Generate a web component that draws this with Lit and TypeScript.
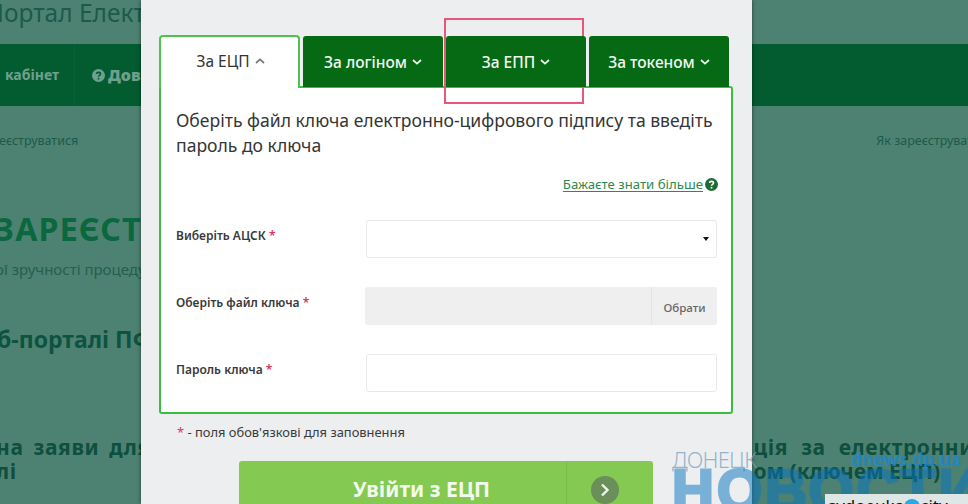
import { LitElement, html, css } from "lit";
import { customElement } from "lit/decorators.js";

const chevron = (up: boolean) => html`<svg class="chev" viewBox="0 0 10 6" width="10" height="6"><path d=${up ? "M1 5 5 1.4 9 5" : "M1 1 5 4.6 9 1"} fill="none" stroke="currentColor" stroke-width="1.7"/></svg>`;

@customElement("app-root")
export class AppRoot extends LitElement {
  static styles = css`
    :host { display: block; position: relative; width: 968px; height: 504px; overflow: hidden; font-family: "Noto Sans", "Open Sans", sans-serif; background: #4d8272; }
    * { box-sizing: border-box; }
    .page { display: flex; flex-direction: column; height: 504px; overflow: hidden; background: #4d8272; color: #0f4f3e; white-space: nowrap; }
    .brand { height: 44px; font-size: 24.5px; line-height: 25px; color: #1c5a4a; margin-left: -14px; flex: none; }
    .nav { height: 62px; flex: none; background: #035c30; display: flex; align-items: center; color: #6fa08e; font-weight: 700; font-size: 14px; }
    .nav span { margin-left: 5px; width: 70px; height: 62px; line-height: 62px; border-right: 1px solid #0a5f3a; }
    .nav b { margin-left: 17px; display: flex; align-items: center; gap: 3px; font-size: 16px; }
    .nav svg { display: block; }
    .crumbs { display: flex; justify-content: space-between; flex: none; font-size: 12.5px; height: 15px; margin-top: 26px; color: #1c5a4a; }
    .crumbs span:first-child { margin-left: -1px; }
    .crumbs span:last-child { margin-right: -26px; }
    .h1 { font-size: 32px; font-weight: 700; color: #0b673e; line-height: 40px; margin: 62px 0 0 -5px; letter-spacing: 1.2px; flex: none; }
    .sub { font-size: 15px; line-height: 20px; margin: 10px 0 0 -5px; color: #235f4f; flex: none; }
    .h3 { font-size: 23px; font-weight: 700; line-height: 28px; margin: 46px 0 0 -3px; color: #0e5341; flex: none; }
    .split { display: flex; justify-content: space-between; margin-top: 82px; font-size: 21px; font-weight: 700; line-height: 24px; color: #0e4f40; letter-spacing: .6px; }
    .split .r { margin-right: -6px; }
    .split .l { margin-left: -4px; word-spacing: 4px; }
    .split .wide { word-spacing: 7px; }
    .split .tight { letter-spacing: 0; }
    .modal { position: absolute; left: 141px; top: 0; width: 611px; height: 504px; background: #eceef0; box-shadow: 0 0 4px rgba(0, 0, 0, .55); padding: 35px 19px 0 18px; color: #333; }
    .tabs { display: flex; gap: 3px; height: 52px; position: relative; z-index: 1; }
    .tab { width: 140px; height: 51px; background: #056a13; color: #f1f7f1; font-size: 15.5px; font-weight: 500; border-radius: 3px 3px 0 0; display: flex; align-items: center; justify-content: center; gap: 5px; padding-top: 1px; margin-top: 1px; }
    .tab.on { width: 141px; height: 53px; margin-top: 0; background: #fff; color: #333; font-size: 15.5px; font-weight: 400; border: 2px solid #4ec24e; border-bottom: 0; padding: 0 0 3px 2px; border-radius: 4px 4px 0 0; }
    .tab.on .chev { color: #777; }
    .panel { margin-top: -1px; height: 328px; background: #fff; border: 2px solid #3dbd3d; border-radius: 0 3px 3px 3px; padding: 20px 15px 0 15px; }
    .lead { font-size: 17.57px; line-height: 25px; color: #353535; margin: 0; white-space: nowrap; }
    .more { display: flex; justify-content: flex-end; align-items: center; gap: 2px; margin: 18px -2px 0 0; font-size: 13.2px; line-height: 16px; color: #2c8a50; }
    .more u { text-underline-offset: 2px; }
    .rows { margin-top: 28px; }
    .row { display: flex; align-items: center; height: 38px; font-size: 12px; font-weight: 600; color: #3a3a3a; }
    .row + .row { margin-top: 29px; }
    .lab { width: 190px; flex: none; padding-bottom: 7px; }
    .star { color: #e0335a; }
    .input { flex: 1; height: 38px; margin-right: -1px; border: 1px solid #e8e8e8; border-radius: 3px; background: #fff; display: flex; align-items: center; justify-content: flex-end; padding-right: 7px; }
    .caret { width: 0; height: 0; border-left: 3.5px solid transparent; border-right: 3.5px solid transparent; border-top: 4px solid #111; }
    .file { flex: 1; height: 38px; margin: 0 -1px; display: flex; background: #efefef; border-radius: 3px; }
    .file i { flex: 1; border-right: 1px solid #e4e4e4; }
    .file span { width: 65px; display: flex; align-items: center; justify-content: center; font-weight: 500; font-size: 11.5px; color: #666; padding-top: 2px; }
    .note { margin: 9px 0 0 18px; font-size: 12.9px; line-height: 18px; color: #3a3a3a; }
    .btn { margin: 20px 0 0 80px; width: 414px; height: 60px; background: #84ca52; border-radius: 3px; display: flex; color: #f3f9ec; font-size: 21px; font-weight: 700; }
    .btn .t { flex: 1; text-align: center; line-height: 56px; padding-left: 38px; }
    .btn .a { width: 87px; border-left: 1px solid #79bd49; display: flex; justify-content: center; padding: 15px 10px 0 0; }
    .btn .a em { width: 28px; height: 28px; border-radius: 50%; background: #6a8f58; display: flex; align-items: center; justify-content: center; }
    .mark { position: absolute; left: 444px; top: 18px; width: 140px; height: 86px; border: 2px solid #e8577a; pointer-events: none; }
    .wm { position: absolute; left: 672px; top: 447px; width: 296px; height: 57px; pointer-events: none; overflow: hidden; }
    .wm .d { font-size: 22px; line-height: 24px; font-weight: 300; color: rgba(120, 160, 190, .75); letter-spacing: -.8px; }
    .wm .n { font-size: 58px; line-height: 70px; font-weight: 700; font-family: "Liberation Sans", sans-serif; color: rgb(8, 116, 192); opacity: .5; letter-spacing: 3px; margin-top: -16px; -webkit-text-stroke: 3px rgb(8, 116, 192); white-space: nowrap; }
    .site { position: absolute; left: 851px; top: 447px; font-size: 17.5px; line-height: 24px; font-weight: 700; color: rgba(30, 135, 200, .9); pointer-events: none; }
    .city { position: absolute; left: 825px; top: 494px; width: 143px; height: 10px; background: #dfe7e6; overflow: hidden; font-size: 17px; line-height: 20px; padding: 2px 0 0 3px; color: #111; display: flex; align-items: flex-start; white-space: nowrap; }
    .city i { width: 16px; height: 16px; border-radius: 50%; background: #28a9ea; margin: 3px 0 0 0; flex: none; }
  `;

  render() {
    return html`
      <div class="page">
        <div class="brand">Портал Електронних послуг</div>
        <div class="nav">
          <span>кабінет</span>
          <b><svg width="13" height="13" viewBox="0 0 14 14"><circle cx="7" cy="7" r="7" fill="#6fa08e"/><path d="M4.8 5.4C5 3 9.2 3 9.2 5.4 9.2 7 7 6.8 7 8.4" fill="none" stroke="#035c30" stroke-width="1.7"/><rect x="6.1" y="9.6" width="1.8" height="1.8" fill="#035c30"/></svg>Довідка</b>
        </div>
        <div class="crumbs"><span>еєструватися</span><span>Як зареєструватися</span></div>
        <div class="h1">ЗАРЕЄСТРУВАТИСЯ</div>
        <div class="sub">ої зручності процедури реєстрації</div>
        <div class="h3">б-порталі ПФУ</div>
        <div class="split">
          <div class="l">на заяви для<br />лі</div>
          <div class="r"><span class="wide">ція за електронни</span><br /><span class="tight">ом (ключем ЕЦП)</span></div>
        </div>
      </div>

      <div class="modal">
        <div class="tabs">
          <div class="tab on">За ЕЦП ${chevron(true)}</div>
          <div class="tab">За логіном ${chevron(false)}</div>
          <div class="tab">За ЕПП ${chevron(false)}</div>
          <div class="tab">За токеном ${chevron(false)}</div>
        </div>
        <div class="panel">
          <p class="lead">Оберіть файл ключа електронно-цифрового підпису та введіть<br />пароль до ключа</p>
          <div class="more">
            <u>Бажаєте знати більше</u>
            <svg width="13" height="13" viewBox="0 0 14 14"><circle cx="7" cy="7" r="7" fill="#1d6b34"/><path d="M4.8 5.4C5 3 9.2 3 9.2 5.4 9.2 7 7 6.8 7 8.4" fill="none" stroke="#fff" stroke-width="1.7"/><rect x="6.1" y="9.6" width="1.8" height="1.8" fill="#fff"/></svg>
          </div>
          <div class="rows">
            <div class="row"><div class="lab">Виберіть АЦСК <span class="star">*</span></div><div class="input"><span class="caret"></span></div></div>
            <div class="row"><div class="lab">Оберіть файл ключа <span class="star">*</span></div><div class="file"><i></i><span>Обрати</span></div></div>
            <div class="row"><div class="lab">Пароль ключа <span class="star">*</span></div><div class="input"></div></div>
          </div>
        </div>
        <div class="note"><span class="star">*</span> - поля обов'язкові для заповнення</div>
        <div class="btn">
          <div class="t">Увійти з ЕЦП</div>
          <div class="a"><em><svg width="10" height="14" viewBox="0 0 10 14"><path d="M2 1.5 7.5 7 2 12.5" fill="none" stroke="#eef5e8" stroke-width="2.4"/></svg></em></div>
        </div>
      </div>

      <div class="mark"></div>
      <div class="wm"><div class="d">ДОНЕЦК</div><div class="n">НОВОСТИ</div></div>
      <div class="site">dnews.dp.ua</div>
      <div class="city">svdoeuka<i></i>city</div>
    `;
  }
}
